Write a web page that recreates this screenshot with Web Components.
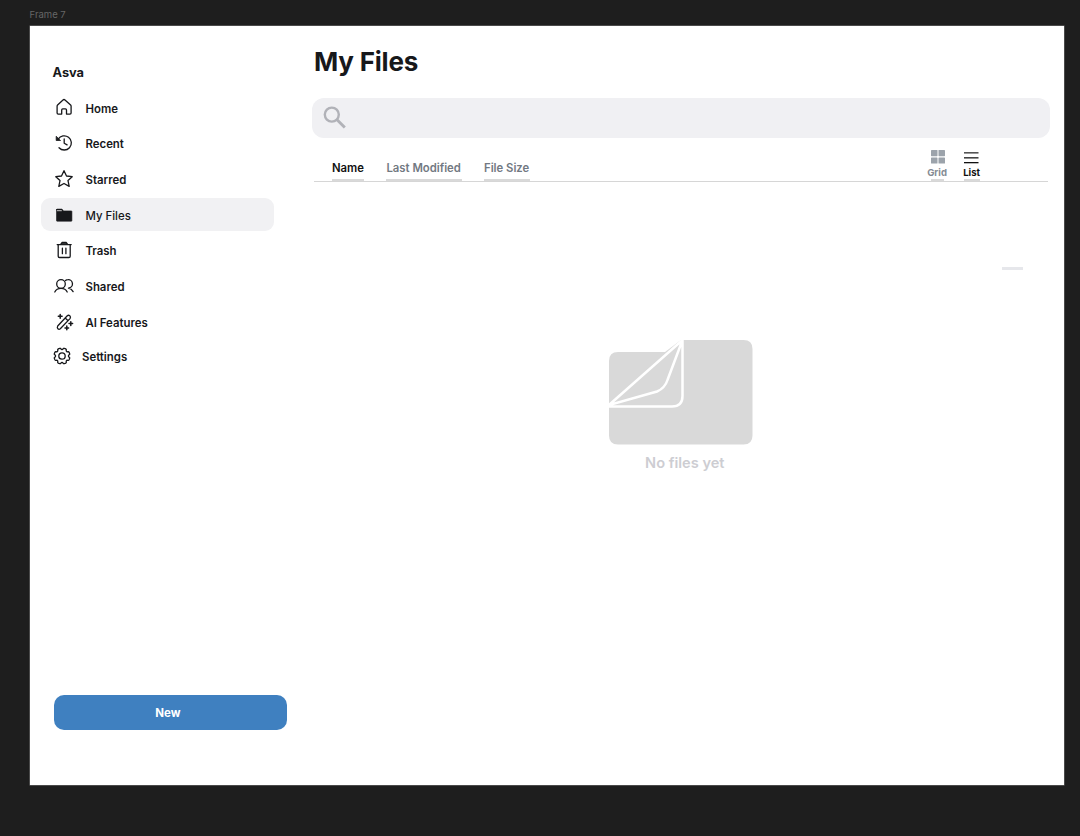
<!DOCTYPE html>
<html lang="en">
<head>
<meta charset="utf-8">
<title>My Files</title>
<style>
html,body{margin:0;height:100%;background:#1e1e1e;overflow:hidden}
body{font-family:Inter,"Liberation Sans",sans-serif;color:#17181b}
</style>
</head>
<body>
<asva-canvas label="Frame 7">
  <asva-sidebar slot="side">
    <nav-item icon="home">Home</nav-item>
    <nav-item icon="recent">Recent</nav-item>
    <nav-item icon="star">Starred</nav-item>
    <nav-item icon="folder" selected>My Files</nav-item>
    <nav-item icon="trash">Trash</nav-item>
    <nav-item icon="shared">Shared</nav-item>
    <nav-item icon="magic">AI Features</nav-item>
    <nav-item icon="gear">Settings</nav-item>
    <new-button slot="action">New</new-button>
  </asva-sidebar>
  <file-view>
    <search-bar></search-bar>
    <file-toolbar>
      <sort-tab active style="width:32.5px">Name</sort-tab>
      <sort-tab style="width:75.5px">Last Modified</sort-tab>
      <sort-tab style="width:46px">File Size</sort-tab>
      <view-toggle slot="views" icon="grid" style="width:20px;--bar:13px">Grid</view-toggle>
      <view-toggle slot="views" icon="list" active style="width:18px;--bar:16px">List</view-toggle>
    </file-toolbar>
    <empty-state>No files yet</empty-state>
  </file-view>
</asva-canvas>
<script>
const define = (name, render) => customElements.define(name, class extends HTMLElement {
  constructor() {
    super();
    this.attachShadow({ mode: 'open' });
  }
  connectedCallback() {
    this.shadowRoot.innerHTML = render(this);
  }
});

const gearPath = () => {
  const pts = [];
  for (let i = 0; i <= 120; i++) {
    const a = i / 120 * Math.PI * 2;
    const r = 7.2 + 0.8 * Math.tanh(2.4 * (Math.cos(8 * a + Math.PI) + .35));
    pts.push((10 + r * Math.sin(a)).toFixed(2) + ' ' + (10 - r * Math.cos(a)).toFixed(2));
  }
  return 'M' + pts.join('L') + 'Z';
};

const icons = {
  home: '<path d="M3.6 8L9 3Q10 2.1 11 3L16.6 8Q17.1 8.500 17.1 9.200V16Q17.1 17.100 16 17.100H12.500V13Q12.500 11.900 11.500 11.900H8.700Q7.700 11.900 7.700 13V17.100H4.200Q3.100 17.100 3.100 16V9.200Q3.100 8.500 3.600 8Z"/>',
  recent: '<path d="M4.200 6.200A7.100 7.100 0 1 1 5 14.700M10.200 5.900V10.200L13.100 11.900"/><path d="M2.200 3.600V7.500H6.200Z" fill="currentColor" stroke-width=".8"/>',
  star: '<path d="M10 1.700L12.500 7L18.200 7.700L14 11.600L15.200 17.400L10 14.500L4.800 17.400L6 11.600L1.800 7.700L7.500 7Z"/>',
  folder: '<path d="M2.500 4.500V15.600Q2.500 16.200 3.100 16.200H17.300Q17.900 16.200 17.900 15.600V6.500Q17.900 5.900 17.300 5.900H9.500L8 4.100H3Q2.500 4.100 2.500 4.500Z" fill="currentColor" stroke-width=".6"/><path d="M3.400 5.700H7.400" stroke="#ddd" stroke-width=".9"/>',
  trash: '<path d="M3.200 4.600H17.200M4.200 4.700V16.200Q4.200 17.500 5.500 17.500H14.900Q16.200 17.500 16.200 16.200V4.700M8.400 8.200V13.700M11.900 8.200V13.700"/><path d="M6.900 4.200L8 2.500H12.300L13.400 4.200Z" fill="#888"/>',
  shared: '<circle cx="7" cy="8" r="4.300"/><path d="M.8 16Q2.500 12.400 7 12.400T13.200 16M11.500 4.600Q12.500 3.700 14 3.700A4.200 4.200 0 0 1 14.500 12.100Q17.500 12.600 19.100 15.600"/>',
  magic: '<path d="M3.700 14L13.300 3.800Q14.500 2.700 15.800 3.800T16 6.600L6.300 16.800Q5 17.900 3.900 16.800T3.700 14ZM11.200 6L13.800 8.500"/><path d="M6.200 2.400V6.200M4.300 4.300H8.100M16.800 9.800V13.400M15 11.600H18.600M12.800 14.100V17.700M11 15.900H14.600" stroke-width="1.500"/>',
  gear: '<path d="' + gearPath() + '"/><circle cx="10" cy="10" r="3.200"/>',
  grid: '<g fill="#9ca3ab" stroke="none"><rect x="0" y="0" width="6.500" height="6.200" rx=".6"/><rect x="7.500" y="0" width="6.500" height="6.200" rx=".6"/><rect x="0" y="7.400" width="6.500" height="6.200" rx=".6"/><rect x="7.500" y="7.400" width="6.500" height="6.200" rx=".6"/></g>',
  list: '<g stroke="none"><rect y="2" width="14.500" height="1.600" fill="#555"/><rect y="7" width="14.500" height="1.600" fill="#444"/><rect y="12" width="14.500" height="1.300" fill="#111"/></g>'
};

define('asva-canvas', el => `
<style>
:host{display:grid;grid-template:26px 759px/1034px;padding-left:29.6px}
.label{color:#666;font-size:9.5px;line-height:29px}
.frame{background:#fff;display:grid;grid-template-columns:282.4px 1fr;box-shadow:0 0 0 .5px #777}
</style>
<div class="label">${el.getAttribute('label')}</div>
<div class="frame"><slot name="side"></slot><slot></slot></div>`);

define('asva-sidebar', () => `
<style>
:host{display:flex;flex-direction:column;padding:37px 24px 55.5px 11.4px}
b{font-weight:650;font-size:12.8px;line-height:20px;padding-left:11.5px}
nav{display:flex;flex-direction:column;gap:3.2px;margin-top:8.2px;width:233px}
.action{margin-top:auto;padding-left:13.5px}
</style>
<b>Asva</b><nav><slot></slot></nav><div class="action"><slot name="action"></slot></div>`);

define('nav-item', el => `
<style>
:host{display:flex;align-items:center;box-sizing:border-box;height:32.5px;padding-left:13.3px;gap:11.2px;border-radius:9px;font-size:11.4px;font-weight:600;line-height:16px}
:host([selected]){background:#f1f1f3;font-weight:500}
:host([icon=gear]){padding-left:11.5px;gap:9.5px;margin-top:-1.3px}
svg{width:20px;height:20px;flex:none;fill:none;stroke:currentColor;stroke-width:1.3;stroke-linejoin:round;stroke-linecap:round}
span{padding-top:2.6px}
:host([icon=gear]) svg{margin-top:1px}
</style>
<svg viewBox="0 0 20 20">${icons[el.getAttribute('icon')]}</svg><span><slot></slot></span>`);

define('new-button', () => `
<style>
:host{display:flex;align-items:center;justify-content:center;box-sizing:border-box;width:233px;height:34.5px;padding:2px 6px 0 0;border-radius:10px;background:#3f80c0;color:#fff;font-size:11.5px;font-weight:650}
</style><slot></slot>`);

define('file-view', () => `
<style>
:host{display:flex;flex-direction:column;padding:18px 14px 0 0}
h1{margin:0 0 18px 2px;font-size:26px;line-height:36px;font-weight:700;letter-spacing:-.2px}
</style>
<h1>My Files</h1><slot></slot>`);

define('search-bar', () => `
<style>
:host{display:flex;align-items:center;height:39.5px;padding-left:11px;border-radius:12px;background:#f0f0f3}
svg{width:24px;height:24px;fill:none;stroke:#b1b2b8}
</style>
<svg viewBox="0 0 24 24"><circle cx="8.800" cy="8.600" r="7" stroke-width="2.400"/><path d="M13.800 13.500L21.800 21.600" stroke-width="2.900"/></svg>`);

define('file-toolbar', () => `
<style>
:host{display:flex;align-items:flex-end;justify-content:space-between;box-sizing:border-box;height:44.5px;margin:0 2px;padding:0 67px 0 18px;border-bottom:1px solid #d6d6d6}
div{display:flex;align-items:flex-end}
.tabs{gap:22px}.views{gap:15.5px}
</style>
<div class="tabs"><slot></slot></div><div class="views"><slot name="views"></slot></div>`);

define('sort-tab', () => `
<style>
:host{display:block;box-sizing:border-box;height:21px;border-bottom:2.5px solid #d9d9d9;color:#727982;font-size:11.3px;line-height:16px;font-weight:600;white-space:nowrap}
:host([active]){color:#111}
</style><slot></slot>`);

define('view-toggle', el => `
<style>
:host{display:flex;flex-direction:column;align-items:center;color:#858b94;font-size:9.6px;font-weight:650;line-height:12px}
:host([active]){color:#111}
svg{width:14.5px;height:14px;margin-bottom:3px}
:host([icon=grid]) svg{margin-left:1.5px}
i{width:var(--bar);height:2.5px;background:#d9d9d9}
</style>
<svg viewBox="0 0 14.500 14">${icons[el.getAttribute('icon')]}</svg><span><slot></slot></span><i></i>`);

define('empty-state', () => `
<style>
:host{display:flex;flex-direction:column;align-items:center}
hr{align-self:flex-end;width:21px;height:3px;margin:85px 27px 69.5px 0;border:0;background:#e6e7eb}
svg{width:144px;height:105px}
span{font-size:14.6px;line-height:20px;font-weight:600;color:#cdcdd2;margin:8.5px 0 0 8px}
</style>
<hr>
<svg viewBox="0 0 144 105"><path d="M0 21Q0 12 9 12H56L72 0H134.500Q143.500 0 143.500 9V95.500Q143.500 104.500 134.500 104.500H9Q0 104.500 0 95.500Z" fill="#d9d9d9"/><path d="M0 65L73.500 0V56Q73.500 66.500 63 66.500H0M0 65L48 51.500Q56 48 58.500 40L73.500 0" fill="none" stroke="#fff" stroke-width="2.500"/></svg>
<span><slot></slot></span>`);
</script>
</body>
</html>
